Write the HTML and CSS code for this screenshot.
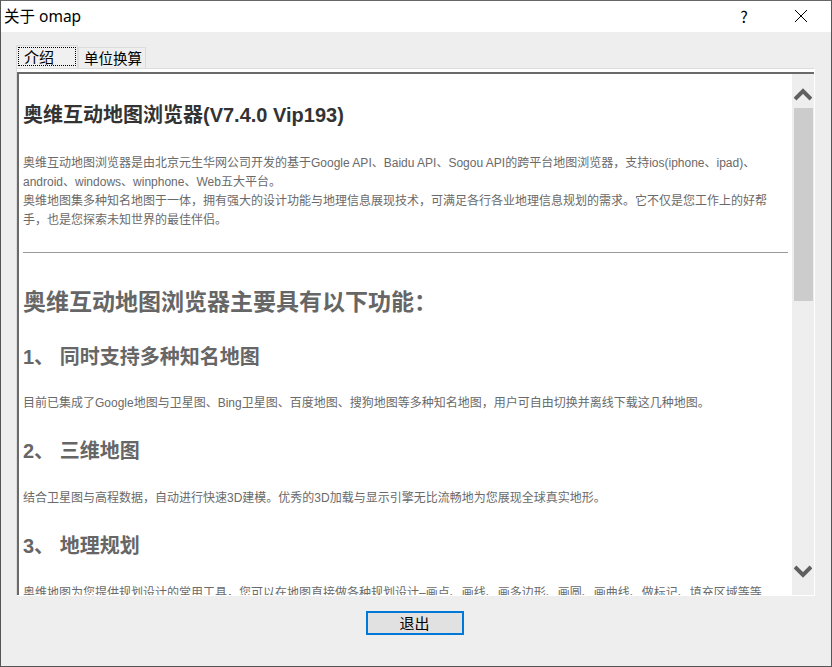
FILE: index.html
```html
<!DOCTYPE html>
<html lang="zh-CN">
<head>
<meta charset="utf-8">
<title>关于 omap</title>
<link rel="stylesheet" href="styles.css">
</head>
<body>
<div class="window">
  <header class="titlebar">
    <span class="title">关于 omap</span>
    <span class="help">?</span>
    <svg class="close" width="14" height="14" viewBox="0 0 14 14"><path d="M1 1L13 13M13 1L1 13" stroke="#000" stroke-width="1" fill="none"/></svg>
  </header>
  <main class="client">
    <div class="tabs">
      <div class="tab tab-active"><span class="focus">介绍</span></div>
      <div class="tab">单位换算</div>
    </div>
    <div class="pane">
      <div class="view">
        <article class="doc">
          <h3 class="doc-title">奥维互动地图浏览器(V7.4.0 Vip193)</h3>
          <p class="intro">奥维互动地图浏览器是由北京元生华网公司开发的基于Google API、Baidu API、Sogou API的跨平台地图浏览器，支持ios(iphone、ipad)、android、windows、winphone、Web五大平台。<br>奥维地图集多种知名地图于一体，拥有强大的设计功能与地理信息展现技术，可满足各行各业地理信息规划的需求。它不仅是您工作上的好帮手，也是您探索未知世界的最佳伴侣。</p>
          <hr class="rule">
          <h1 class="main-head">奥维互动地图浏览器主要具有以下功能：</h1>
          <h2 class="sec-head">1、 同时支持多种知名地图</h2>
          <p class="sec-text">目前已集成了Google地图与卫星图、Bing卫星图、百度地图、搜狗地图等多种知名地图，用户可自由切换并离线下载这几种地图。</p>
          <h2 class="sec-head">2、 三维地图</h2>
          <p class="sec-text">结合卫星图与高程数据，自动进行快速3D建模。优秀的3D加载与显示引擎无比流畅地为您展现全球真实地形。</p>
          <h2 class="sec-head">3、 地理规划</h2>
          <p class="sec-text">奥维地图为您提供规划设计的常用工具，您可以在地图直接做各种规划设计–画点、画线、画多边形、画圆、画曲线、做标记、填充区域等等</p>
        </article>
        <div class="scrollbar">
          <svg class="arrow" width="18" height="14" viewBox="0 0 18 14"><path d="M1 11L9 3L17 11" stroke="#606060" stroke-width="4" fill="none"/></svg>
          <div class="track"><div class="thumb"></div></div>
          <svg class="arrow" width="18" height="14" viewBox="0 0 18 14"><path d="M1 3L9 11L17 3" stroke="#606060" stroke-width="4" fill="none"/></svg>
        </div>
      </div>
    </div>
    <div class="actions"><button class="exit" type="button">退出</button></div>
  </main>
</div>
</body>
</html>
```
FILE: styles.css
```css
* { box-sizing: border-box; }
html, body { margin: 0; height: 100%; overflow: hidden; }
body { font-family: "Liberation Sans", "Noto Sans CJK SC", sans-serif; }
.window {
  width: 832px; height: 667px; border: 1px solid #555; border-top-color: #666;
  display: flex; flex-direction: column; background: #eee;
}
.titlebar {
  height: 31px; background: #fff; display: flex; align-items: center;
  padding: 0 0 2px 3px; font-size: 15.5px; color: #000; flex: none;
  font-family: "Noto Sans CJK SC", "Noto Sans", sans-serif;
}
.title { flex: 1; font-family: "Noto Sans", "Noto Sans CJK SC", sans-serif; }
.help { width: 14px; margin-right: 43px; font-size: 16px; text-align: center; }
.close { margin-right: 23px; }
.client { flex: 1; display: flex; flex-direction: column; padding: 13px 16px 0 15px; min-height: 0; }
.tabs { display: flex; align-items: flex-end; height: 23px; flex: none; }
.tab {
  height: 21px; width: 68px; background: #eee; border: 1px solid #dcdcdc; border-bottom: 0;
  font-size: 14.5px; line-height: 20px; padding: 0 0 0 5px; color: #000; white-space: nowrap;
  font-family: "Noto Sans CJK SC", sans-serif;
}
.tab-active { height: 23px; width: 62px; padding: 1px 1px 0 1px; background: #f0f0f0; font-size: 15px; }
.focus { display: block; height: 19px; line-height: 17px; border: 1px dotted #000; padding-left: 5px; }
.pane {
  height: 528px; border: 1px solid #dcdcdc; border-bottom-color: #fff; border-right-color: #fff;
  background: #fff; flex: none; padding: 3px 0 0;
}
.view {
  height: 523px; display: flex; overflow: hidden;
  border-top: 2px solid #6a6a6a; border-left: 2px solid #6a6a6a;
}
.doc { flex: 1; padding: 0 4px; color: #6a6a6a; overflow: hidden; min-width: 0; }
.doc-title { margin: 29px 0 0; font-size: 20px; line-height: 24px; font-weight: bold; color: #333; }
.intro { margin: 27px 0 0; font-size: 12px; line-height: 19px; }
.rule { margin: 22px 0 0; border: 0; border-top: 1px solid #999; height: 1px; }
.main-head { margin: 35px 0 0; font-size: 23px; line-height: 28px; font-weight: bold; color: #666; }
.sec-head { margin: 27px 0 0; font-size: 20px; line-height: 28px; font-weight: bold; color: #666; }
.sec-text { margin: 23px 0 0; font-size: 12px; line-height: 19px; white-space: nowrap; }
.sec-text + .sec-head { margin-top: 24px; }
.sec-text + .sec-head + .sec-text { margin-top: 24px; }
.scrollbar {
  width: 22px; flex: none; background: #eee; display: flex; flex-direction: column;
  align-items: center;
}
.arrow { flex: none; margin-top: 14px; }
.track { flex: 1; width: 19px; min-height: 0; padding-top: 6px; }
.thumb { width: 19px; height: 193px; background: #ccc; }
.scrollbar .arrow:last-child { margin: 0 0 17px; }
.actions { flex: 1; display: flex; justify-content: center; align-items: flex-start; padding: 15px 2px 0 0; }
.exit {
  width: 98px; height: 24px; background: #e1e1e1; border: 2px solid #0078d7; padding: 0;
  font-size: 15px; color: #000; font-family: "Noto Sans CJK SC", sans-serif; line-height: 18px;
}
```
